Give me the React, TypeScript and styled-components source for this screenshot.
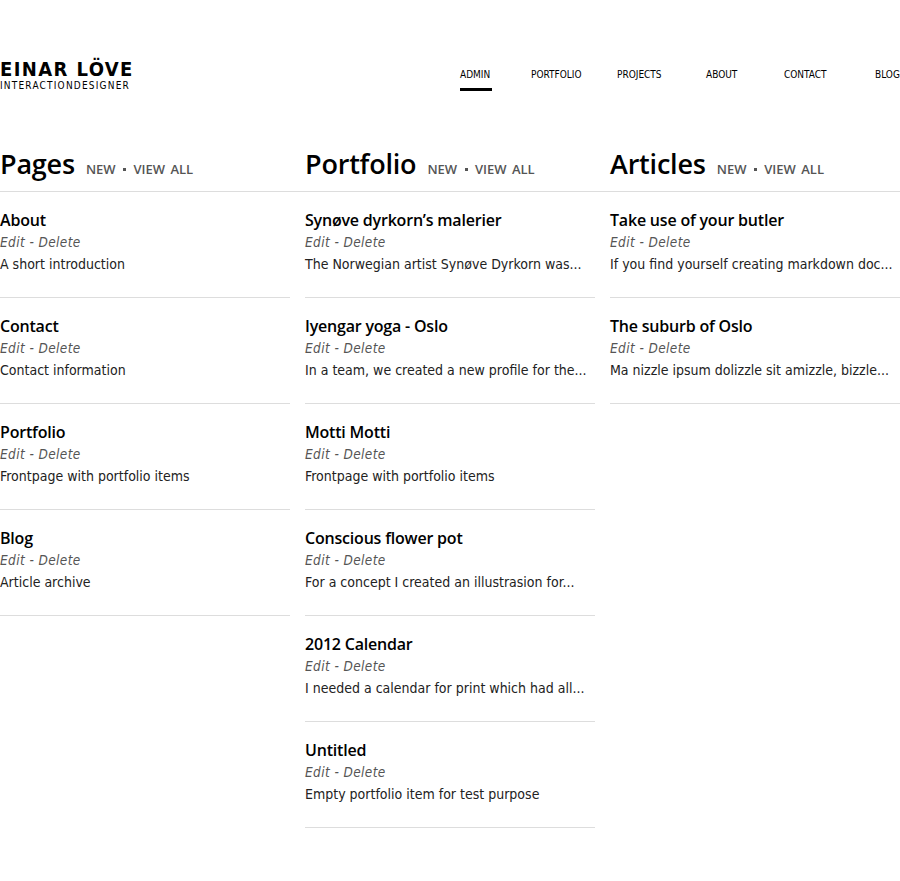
import styled, { createGlobalStyle } from "styled-components";

type Item = { title: string; text: string };

const pages: Item[] = [
  { title: "About", text: "A short introduction" },
  { title: "Contact", text: "Contact information" },
  { title: "Portfolio", text: "Frontpage with portfolio items" },
  { title: "Blog", text: "Article archive" },
];

const portfolio: Item[] = [
  { title: "Synøve dyrkorn’s malerier", text: "The Norwegian artist Synøve Dyrkorn was..." },
  { title: "Iyengar yoga - Oslo", text: "In a team, we created a new profile for the..." },
  { title: "Motti Motti", text: "Frontpage with portfolio items" },
  { title: "Conscious flower pot", text: "For a concept I created an illustrasion for..." },
  { title: "2012 Calendar", text: "I needed a calendar for print which had all..." },
  { title: "Untitled", text: "Empty portfolio item for test purpose" },
];

const articles: Item[] = [
  { title: "Take use of your butler", text: "If you find yourself creating markdown doc..." },
  { title: "The suburb of Oslo", text: "Ma nizzle ipsum dolizzle sit amizzle, bizzle..." },
];

const nav = [
  { label: "ADMIN", width: 71, active: true },
  { label: "PORTFOLIO", width: 86 },
  { label: "PROJECTS", width: 89 },
  { label: "ABOUT", width: 78 },
  { label: "CONTACT", width: 91 },
  { label: "BLOG", width: 40 },
];

const GlobalStyle = createGlobalStyle`
  html, body {
    margin: 0;
    padding: 0;
    background: #fff;
    overflow: hidden;
  }
  body {
    font-family: "DejaVu Sans", sans-serif;
    color: #111;
  }
`;

const Page = styled.div`
  width: 900px;
  padding-top: 58px;
`;

const Header = styled.header`
  display: flex;
  justify-content: space-between;
  align-items: flex-start;
  height: 89px;
`;

const Logo = styled.div`
  display: flex;
  flex-direction: column;
`;

const LogoName = styled.div`
  font-family: "DejaVu Sans Condensed", "DejaVu Sans", sans-serif;
  font-weight: 700;
  font-size: 20px;
  line-height: 22px;
  letter-spacing: 1.4px;
  color: #000;
`;

const LogoSub = styled.div`
  font-family: "DejaVu Sans Condensed", "DejaVu Sans", sans-serif;
  font-size: 10px;
  line-height: 11px;
  letter-spacing: 1.2px;
  color: #000;
`;

const Nav = styled.nav`
  display: flex;
  padding-top: 11px;
  margin-right: -15px;
`;

const NavItem = styled.a<{ $w: number; $active?: boolean }>`
  width: ${(p) => p.$w}px;
  font-family: "DejaVu Sans Condensed", "DejaVu Sans", sans-serif;
  font-size: 10px;
  line-height: 12px;
  color: #000;
  text-decoration: none;

  &::after {
    content: "";
    display: ${(p) => (p.$active ? "block" : "none")};
    width: 32px;
    height: 3px;
    background: #000;
    margin-top: 7px;
  }
`;

const Heads = styled.div`
  display: grid;
  grid-template-columns: 290px 290px 290px;
  column-gap: 15px;
  border-bottom: 1px solid #ddd;
  padding-bottom: 10px;
`;

const Head = styled.div`
  display: flex;
  align-items: baseline;
  gap: 11px;
`;

const HeadTitle = styled.h2`
  margin: 0;
  font-family: "Open Sans", sans-serif;
  font-weight: 600;
  font-size: 27px;
  line-height: 34px;
  color: #000;
  letter-spacing: -0.2px;
`;

const HeadLinks = styled.span`
  font-family: "Open Sans", sans-serif;
  font-weight: 600;
  font-size: 13px;
  color: #555;
  word-spacing: 2px;
`;

const Dot = styled.span`
  display: inline-block;
  width: 3px;
  height: 3px;
  background: #555;
  margin: 0 2px;
  vertical-align: 3px;
`;

const Columns = styled.div`
  display: grid;
  grid-template-columns: 290px 290px 290px;
  column-gap: 15px;
  align-items: start;
`;

const List = styled.ul`
  list-style: none;
  margin: 0;
  padding: 0;
`;

const Entry = styled.li`
  padding: 17px 0 22px;
  border-bottom: 1px solid #ddd;
`;

const EntryTitle = styled.div`
  font-family: "Open Sans", sans-serif;
  font-weight: 600;
  font-size: 16px;
  line-height: 22px;
  color: #000;
  letter-spacing: -0.2px;
`;

const Meta = styled.div`
  font-family: "DejaVu Sans Condensed", "DejaVu Sans", sans-serif;
  font-style: italic;
  font-size: 13.5px;
  line-height: 22px;
  color: #555;
  letter-spacing: 0.4px;
`;

const Desc = styled.div`
  font-family: "DejaVu Sans Condensed", "DejaVu Sans", sans-serif;
  font-size: 14px;
  line-height: 22px;
  color: #222;
  white-space: nowrap;
`;

const Section = ({ items }: { items: Item[] }) => (
  <List>
    {items.map((it) => (
      <Entry key={it.title}>
        <EntryTitle>{it.title}</EntryTitle>
        <Meta>Edit - Delete</Meta>
        <Desc>{it.text}</Desc>
      </Entry>
    ))}
  </List>
);

export default function App() {
  return (
    <Page>
      <GlobalStyle />
      <Header>
        <Logo>
          <LogoName>EINAR LÖVE</LogoName>
          <LogoSub>INTERACTIONDESIGNER</LogoSub>
        </Logo>
        <Nav>
          {nav.map((n) => (
            <NavItem key={n.label} href="#" $w={n.width} $active={n.active}>
              {n.label}
            </NavItem>
          ))}
        </Nav>
      </Header>
      <Heads>
        {["Pages", "Portfolio", "Articles"].map((t) => (
          <Head key={t}>
            <HeadTitle>{t}</HeadTitle>
            <HeadLinks>
              NEW <Dot /> VIEW ALL
            </HeadLinks>
          </Head>
        ))}
      </Heads>
      <Columns>
        <Section items={pages} />
        <Section items={portfolio} />
        <Section items={articles} />
      </Columns>
    </Page>
  );
}
